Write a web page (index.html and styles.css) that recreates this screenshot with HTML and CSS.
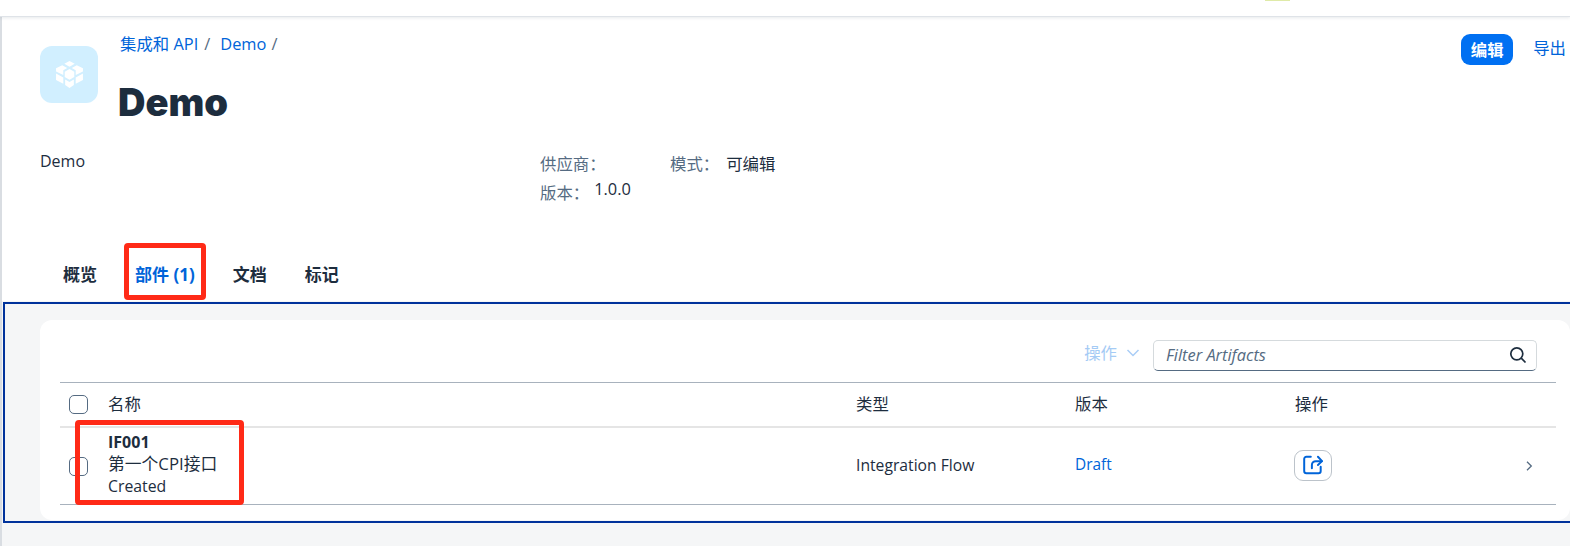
FILE: index.html
```html
<!DOCTYPE html>
<html lang="zh">
<head>
<meta charset="utf-8">
<title>Demo</title>
<link rel="stylesheet" href="styles.css">
</head>
<body>
<div class="topbar"><span class="top-mark"></span></div>
<div class="page">
<header class="header">
  <div class="title-row">
    <div class="pkg-icon">
      <svg viewBox="0 0 28 28" width="29" height="29" fill="#fff"><path d="M14 1l5 2.700-5 2.800-5-2.800z"/><path d="M7 5l4.800 2.700-3.800 2.200v4.700L1 11V8z"/><path d="M21 5l-4.800 2.700 3.800 2.200v4.700l7-3.600V8z"/><path d="M14 8.800l4.600 2.600v5L14 19l-4.600-2.600v-5z"/><path d="M1 13l7 3.800v6.200l-7-3.700z"/><path d="M27 13l-7 3.800v6.200l7-3.700z"/><path d="M9.800 18.800l4.200 2.400 4.200-2.400v5.400L14 27l-4.200-2.800z"/></svg>
    </div>
    <div class="title-col">
      <nav class="crumbs"><a>集成和 API</a><span class="sep">/</span><a>Demo</a><span class="sep">/</span></nav>
      <h1 class="title">Demo</h1>
    </div>
    <div class="actions">
      <button class="btn-primary">编辑</button>
      <a class="btn-link">导出</a>
    </div>
  </div>
  <div class="meta">
    <div class="desc">Demo</div>
    <div class="meta-col">
      <div class="meta-line"><span class="label">供应商：</span></div>
      <div class="meta-line"><span class="label lower">版本：</span><span class="value version">1.0.0</span></div>
    </div>
    <div class="meta-col">
      <div class="meta-line"><span class="label">模式：</span><span class="value">可编辑</span></div>
    </div>
  </div>
  <div class="tabs">
    <a class="tab">概览</a>
    <a class="tab active">部件 (1)</a>
    <a class="tab">文档</a>
    <a class="tab">标记</a>
  </div>
</header>
<main class="section">
  <div class="card">
    <div class="toolbar">
      <span class="menu">操作
        <svg width="14" height="8" viewBox="0 0 14 8" fill="none" stroke="#a9cdf6" stroke-width="1.500"><path d="M1.500 1l5.500 5.500L12.500 1"/></svg>
      </span>
      <div class="search">
        <span class="placeholder">Filter Artifacts</span>
        <svg width="18" height="18" viewBox="0 0 18 18" fill="none" stroke="#1d2d3e" stroke-width="1.700"><circle cx="7.800" cy="7.800" r="6"/><path d="M12.200 12.200l4.300 4.300"/></svg>
      </div>
    </div>
    <div class="row head">
      <span class="cell-check"><span class="check"></span></span>
      <span class="col-title">名称</span><span class="col-title">类型</span><span class="col-title">版本</span><span class="col-title">操作</span><span></span>
    </div>
    <div class="row item">
      <span class="cell-check"><span class="check"></span></span>
      <div class="name">
        <strong>IF001</strong>
        <span class="name-zh">第一个CPI接口</span>
        <span>Created</span>
      </div>
      <span class="type">Integration Flow</span>
      <a class="draft">Draft</a>
      <span><button class="icon-btn">
        <svg width="22" height="22" viewBox="0 0 20 20" fill="none" stroke="#0064d9" stroke-width="1.800" stroke-linecap="round" stroke-linejoin="round"><path d="M8 2.500H4a2 2 0 0 0-2 2v11a2 2 0 0 0 2 2h11a2 2 0 0 0 2-2v-4"/><path d="M9 13V10a3.500 3.500 0 0 1 3.500-3.500H18"/><path d="M14.500 2.500l3.700 4-3.700 3.500"/></svg>
      </button></span>
      <span class="chev"><svg width="7" height="10" viewBox="0 0 7 10" fill="none" stroke="#556b82" stroke-width="1.300"><path d="M1 .8L5.300 5 1 9.200"/></svg></span>
    </div>
  </div>
</main>
</div>
<div class="mark mark-tab"></div>
<div class="mark mark-name"></div>
</body>
</html>
```
FILE: styles.css
```css
* { box-sizing: border-box; }
html, body { margin: 0; height: 546px; overflow: hidden; }
body {
  background: #f5f6f7;
  color: #1d2d3e;
  font-family: "Open Sans", "Noto Sans CJK SC", sans-serif;
  font-size: 16px;
  position: relative;
}
.topbar {
  height: 17px;
  background: #fff;
  border-bottom: 1px solid #dfe3e8;
  box-shadow: 0 1px 3px rgba(60, 80, 100, .12);
  position: relative;
  z-index: 1;
}
.top-mark { position: absolute; left: 1265px; top: 0; width: 25px; height: 1px; background: #dfeaa8; }
.page { border-left: 2px solid #d9dde2; height: 529px; }
.header {
  height: 284px;
  background: #fff;
  padding: 0 0 0 38px;
  display: flex;
  flex-direction: column;
}
.title-row { display: flex; height: 126px; }
.pkg-icon {
  width: 58px; height: 57px; margin-top: 29px;
  background: #d1efff; border-radius: 12px;
  display: flex; align-items: center; justify-content: center;
}
.title-col { margin-left: 22px; padding-top: 17px; }
.crumbs { display: flex; line-height: 20px; color: #556b82; font-size: 16.400px; }
.crumbs a { color: #0064d9; }
.sep { margin: 0 10px 0 6px; }
.sep:last-child { margin-left: 5px; }
.title {
  margin: 25px 0 0 -2px;
  font: 900 38px/46px Inter, sans-serif;
  color: #1d2d3e;
}
.actions { margin-left: auto; padding-top: 17px; display: flex; align-items: flex-start; gap: 20px; padding-right: 4px; }
.btn-primary {
  width: 52px; height: 31px; border: 0; border-radius: 9px; padding: 0 0 2px;
  background: #0070f2; color: #fff; font: 700 16.400px "Noto Sans CJK SC", sans-serif;
}
.btn-link { color: #0064d9; font-size: 16.400px; line-height: 28px; }
.meta { display: flex; height: 120px; padding-top: 7px; }
.desc { width: 500px; }
.meta-col { width: 131px; padding-top: 2px; }
.meta-col + .meta-col { margin-left: -1px; }
.meta-line { display: flex; line-height: 24px; height: 25px; align-items: flex-start; }
.label { color: #556b82; font-size: 16.400px; }
.value { margin-left: 7px; font-size: 16.400px; }
.value.version { margin-left: 5px; }
.lower { padding-top: 4px; }
.tabs { display: flex; padding-left: 23px; gap: 38px; font-weight: 700; font-size: 17px; }
.tab { line-height: 24px; color: #1d2d3e; }
.tab.active { color: #0064d9; }
.section {
  height: 221px;
  margin-top: 1px;
  margin-left: 1px;
  border: 2px solid #00329b;
  border-right: 0;
  padding: 16px 0 0 35px;
}
.card { background: #fff; border-radius: 12px; height: 200px; padding: 0 14px 0 20px; }
.toolbar { height: 62px; display: flex; justify-content: flex-end; align-items: flex-start; padding: 20px 19px 0 0; gap: 13px; }
.menu { color: #a5cbf5; font-size: 16.400px; line-height: 26px; display: flex; align-items: center; gap: 9px; }
.search {
  width: 384px; height: 31px; border: 1px solid #d5dadd; border-bottom-color: #556b82;
  border-radius: 5px; display: flex; align-items: center; justify-content: space-between;
  padding: 0 9px 2px 12px;
}
.placeholder { color: #556b82; font-style: italic; font-size: 16.400px; }
.row {
  display: grid;
  grid-template-columns: 48px 748px 219px 220px 1fr 30px;
  align-items: center;
}
.head { height: 46px; border-top: 1px solid #a8b2bd; border-bottom: 2px solid #e5e5e5; font-size: 16.400px; }
.col-title { margin-bottom: 3px; }
.item { height: 77px; border-bottom: 1px solid #a8b2bd; }
.cell-check { display: flex; padding-left: 9px; }
.check { width: 19px; height: 19px; border: 1px solid #556b82; border-radius: 5px; background: #fff; }
.name { display: flex; flex-direction: column; line-height: 22px; font-size: 15.800px; margin-bottom: 4px; }
.name strong { font-size: 16px; }
.name-zh { font-size: 16.800px; }
.type { font-size: 15.700px; margin-bottom: 2px; }
.draft { color: #0064d9; font-size: 15.400px; margin-bottom: 3px; }
.icon-btn {
  width: 38px; height: 31px; padding: 0; border: 1px solid #bcc3ca; border-radius: 9px; background: #fff;
  display: flex; align-items: center; justify-content: center;
  margin: 0 0 2px -1px;
}
.chev { display: flex; }
.mark { position: absolute; border: 5px solid #ff2a17; border-radius: 4px; z-index: 2; }
.mark-tab { left: 124px; top: 243px; width: 82px; height: 57px; }
.mark-name { left: 75px; top: 420px; width: 169px; height: 85px; }
```
